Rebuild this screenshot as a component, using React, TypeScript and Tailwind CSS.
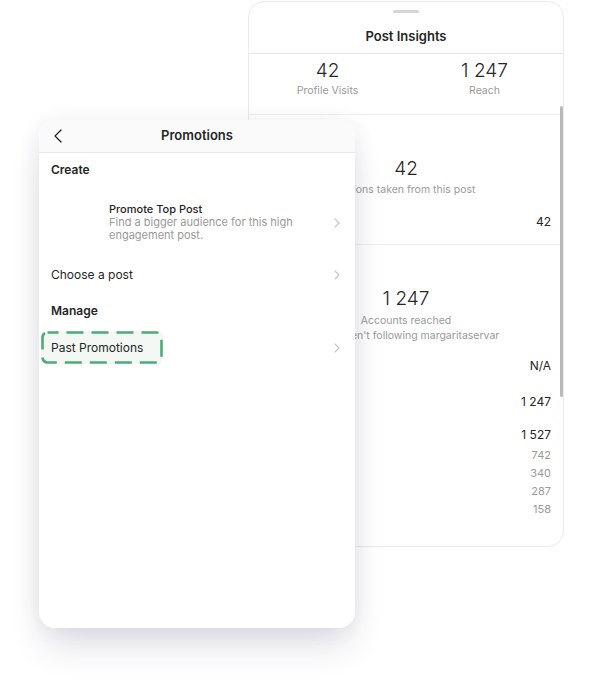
import React from 'react';

const font = { fontFamily: 'Inter, "Noto Sans", sans-serif' };

function Chevron() {
  return (
    <svg width="6" height="10" viewBox="0 0 6 10" fill="none" className="shrink-0">
      <path d="M1 1l4 4-4 4" stroke="#c4c4c4" strokeWidth="1.1" strokeLinecap="round" strokeLinejoin="round" />
    </svg>
  );
}

function StatRow({ value, muted }: { value: string; muted?: boolean }) {
  return (
    <div
      className={
        muted
          ? 'text-right text-[11px] leading-[18px] text-[#9a9a9a]'
          : 'text-right text-[12px] leading-[16px] text-[#262626]'
      }
    >
      {value}
    </div>
  );
}

function InsightsPanel() {
  return (
    <div className="absolute left-[248px] top-[1px] w-[316px] h-[546px] rounded-[16px] border border-[#ebebeb] bg-white overflow-hidden">
      {/* scrollbar */}
      <div className="absolute left-[311px] top-[104px] w-[3px] h-[291px] rounded-full bg-[#b9b9b9]" />

      <div className="pt-[8px] flex justify-center">
        <div className="w-[26px] h-[3px] rounded-full bg-[#d6d6d6]" />
      </div>
      <div className="h-[41px] pt-[15px] text-center text-[13px] leading-[16px] font-semibold text-[#262626] border-b border-[#e6e6e6]">
        Post Insights
      </div>

      <div className="grid grid-cols-2 h-[61px] pt-[5px] border-b border-[#efefef]">
        <div className="flex flex-col items-center">
          <div className="text-[19px] leading-[24px] font-light text-[#262626]">42</div>
          <div className="mt-[1px] text-[10.5px] leading-[14px] text-[#9a9a9a]">Profile Visits</div>
        </div>
        <div className="flex flex-col items-center">
          <div className="text-[19px] leading-[24px] font-light text-[#262626]">1 247</div>
          <div className="mt-[1px] text-[10.5px] leading-[14px] text-[#9a9a9a]">Reach</div>
        </div>
      </div>

      <div className="h-[130px] pt-[42px] pr-[12px] border-b border-[#efefef]">
        <div className="flex flex-col items-center pl-[12px]">
          <div className="text-[19px] leading-[24px] font-light text-[#262626]">42</div>
          <div className="mt-[2px] text-[10.5px] leading-[14px] text-[#9a9a9a]">Actions taken from this post</div>
        </div>
        <div className="mt-[17px]">
          <StatRow value="42" />
        </div>
      </div>

      <div className="pt-[42px] pr-[12px]">
        <div className="flex flex-col items-center pl-[12px]">
          <div className="text-[19px] leading-[24px] font-light text-[#262626]">1 247</div>
          <div className="mt-[2px] text-[10.5px] leading-[15px] text-[#9a9a9a]">Accounts reached</div>
          <div className="text-[10.5px] leading-[15px] text-[#9a9a9a]">0% weren't following margaritaservar</div>
        </div>
        <div className="mt-[15px]">
          <StatRow value="N/A" />
        </div>
        <div className="mt-[20px]">
          <StatRow value="1 247" />
        </div>
        <div className="mt-[17px]">
          <StatRow value="1 527" />
        </div>
        <div className="mt-[3px]">
          <StatRow value="742" muted />
          <StatRow value="340" muted />
          <StatRow value="287" muted />
          <StatRow value="158" muted />
        </div>
      </div>
    </div>
  );
}

function PromotionsPanel() {
  return (
    <div className="absolute left-[39px] top-[120px] w-[316px] h-[508px] rounded-[16px] bg-white overflow-hidden shadow-[0_22px_36px_-6px_rgba(40,40,90,0.16),0_0_22px_rgba(40,40,90,0.07)]">
      <div className="relative h-[33px] flex items-center justify-center bg-[#fafafa] border-b border-[#e8e8e8]">
        <svg width="10" height="14" viewBox="0 0 10 14" fill="none" className="absolute left-[14px] top-[9px]">
          <path d="M8 1L2 7l6 6" stroke="#262626" strokeWidth="1.3" strokeLinecap="round" strokeLinejoin="round" />
        </svg>
        <span className="text-[13px] font-semibold text-[#262626]">Promotions</span>
      </div>

      <div className="pl-[12px] pr-[15px] pt-[9px]">
        <div className="text-[12px] leading-[16px] font-semibold text-[#262626]">Create</div>

        <div className="mt-[25px] flex items-center">
          <div className="w-[58px] shrink-0" />
          <div className="flex-1 text-[11px] leading-[13px]">
            <div className="font-medium text-[#262626]">Promote Top Post</div>
            <div className="text-[#9a9a9a]">
              Find a bigger audience for this high
              <br />
              engagement post.
            </div>
          </div>
          <Chevron />
        </div>

        <div className="mt-[25px] flex items-center justify-between">
          <span className="text-[12px] leading-[16px] text-[#262626]">Choose a post</span>
          <Chevron />
        </div>

        <div className="mt-[20px] text-[12px] leading-[16px] font-semibold text-[#262626]">Manage</div>

        <div className="mt-[21px] flex items-center justify-between">
          <span className="relative text-[12px] leading-[16px] text-[#262626]">
            <span className="absolute left-[-10px] top-[-9px] w-[122px] h-[33px] rounded-[6px] bg-[#f3f8f4]" />
            <svg width="122" height="33" viewBox="0 0 122 33" fill="none" className="absolute left-[-10px] top-[-9px]">
              <rect x="1.5" y="1.5" width="119" height="30" rx="5" stroke="#4fab76" strokeWidth="2.6" strokeDasharray="17 8" strokeDashoffset="6" />
            </svg>
            <span className="relative">Past Promotions</span>
          </span>
          <Chevron />
        </div>
      </div>
    </div>
  );
}

export default function App() {
  return (
    <div className="relative w-[600px] h-[690px] bg-white overflow-hidden" style={font}>
      <InsightsPanel />
      <PromotionsPanel />
    </div>
  );
}
